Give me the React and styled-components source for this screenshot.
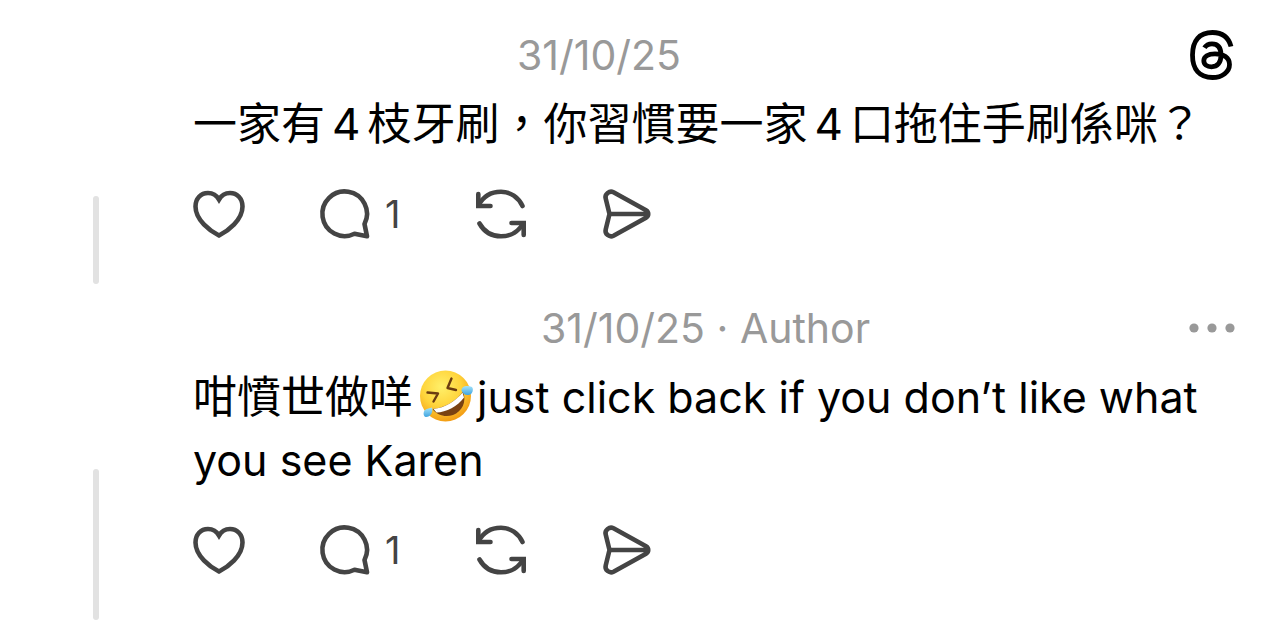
import React from 'react';
import styled, { createGlobalStyle } from 'styled-components';

const GlobalStyle = createGlobalStyle`
  * { box-sizing: border-box; }
  body {
    margin: 0;
    background: #fff;
    color: #000;
    font-family: Inter, "Noto Sans CJK TC", sans-serif;
  }
`;

const Thread = styled.main`
  padding: 11px 49px 0 93px;
`;

const Post = styled.article`
  display: flex;
  gap: 94px;
`;

const Rail = styled.div`
  flex: none;
  width: 6px;
  margin-top: 185px;
  border-radius: 3px;
  background: #e2e2e2;
`;

const Content = styled.div`
  flex: 1;
  min-width: 0;
  padding: 14px 0 42px;
`;

const Header = styled.header`
  display: flex;
  align-items: center;
  height: 60px;
  margin-bottom: 8px;
  color: #999;
  font-size: 41px;
  line-height: 60px;
`;

const NameSlot = styled.span`
  flex: none;
  width: ${(p) => p.$width}px;
`;

const Meta = styled.span`
  flex: 1;
  white-space: nowrap;
`;

const IconButton = styled.button`
  display: flex;
  align-items: center;
  padding: 0;
  border: 0;
  background: none;
  color: ${(p) => p.$color || '#444'};
  font: inherit;
  cursor: pointer;

  svg { display: block; overflow: visible; }
`;

const Body = styled.p`
  margin: 0 -16px 30px 0;
  font-size: 44px;
  line-height: 63px;
`;

const Digit = styled.span`
  margin: 0 7px;
`;

const Latin = styled.span`
  font-size: 43px;
`;

const EmojiSvg = styled.svg`
  width: 54px;
  height: 54px;
  margin: 0 4px 0 6px;
  vertical-align: -10px;
`;

const Actions = styled.div`
  display: flex;
  align-items: center;
  height: 56px;
`;

const ActionSlot = styled.div`
  width: ${(p) => p.$width}px;
`;

const Count = styled.span`
  margin-left: 14px;
  font-size: 38px;
  line-height: 56px;
`;

const stroke = {
  fill: 'none',
  stroke: 'currentColor',
  strokeWidth: 4.6,
  strokeLinecap: 'round',
  strokeLinejoin: 'round',
};

const Heart = () => (
  <svg width="52" height="52" viewBox="0 0 52 52" {...stroke} aria-hidden="true">
    <path strokeLinejoin="miter" d="M26 11.5C23.5 7.2 19.3 5 15 5C7.800 5 2.500 10.500 2.500 18.500C2.500 32 17 43 26 47.500C35 43 49.500 32 49.500 18.500C49.500 10.500 44.200 5 37 5C32.700 5 28.500 7.200 26 11.500Z" />
  </svg>
);

const Bubble = () => (
  <svg width="52" height="52" viewBox="0 0 52 52" {...stroke} aria-hidden="true">
    <path d="M45.500 36A22.300 22.300 0 1 0 35.500 45.800L48 48.200Z" />
  </svg>
);

const Repost = () => (
  <svg width="52" height="52" viewBox="0 0 52 52" {...stroke} aria-hidden="true">
    <path d="M3.500 17.500C8 8.500 16 3.700 26 3.700C35.500 3.700 43.500 9.500 47.500 18" />
    <path strokeLinejoin="miter" d="M3.300 6V18H15.500" />
    <path d="M4.500 35.500C9 43.500 16.500 48.300 26 48.300C36 48.300 44 43 48 35.500" />
    <path strokeLinejoin="miter" d="M36.500 35H48.700V47" />
  </svg>
);

const Send = () => (
  <svg width="52" height="52" viewBox="0 0 52 52" {...stroke} aria-hidden="true">
    <path d="M12.500 4.300L45 22.300C48 24 48 28 45 29.700L12.500 47.700C8.500 49.700 3.500 46 4.700 41.500L8.500 26L4.700 10.500C3.500 6 8.500 2.300 12.500 4.300ZM8.500 26H46" />
  </svg>
);

const ThreadsLogo = () => (
  <svg width="45" height="50" viewBox="0 0 45 50" {...stroke} strokeWidth="4.8" strokeLinecap="butt" aria-hidden="true">
    <path d="M41 16.500C38.500 7 32.500 2.500 22.500 2.500C9.500 2.500 2.500 10.500 2.500 25C2.500 39.500 9.500 47.500 22.500 47.500C32 47.500 39.500 42 39.500 34.500C39.500 27.500 33.500 23.800 25 23.800C18 23.800 13.800 26.500 13.800 30.800C13.800 34.500 17 36.800 21.500 36.800C27.500 36.800 31 32.800 31 25C31 17.500 28 13.800 22 13.800C18.500 13.800 16 15.200 14.500 17.800" />
  </svg>
);

const Dots = () => (
  <svg width="46" height="10" viewBox="0 0 46 10" fill="currentColor" aria-hidden="true">
    <circle cx="5" cy="5" r="4.600" />
    <circle cx="23" cy="5" r="4.600" />
    <circle cx="41" cy="5" r="4.600" />
  </svg>
);

const Rofl = () => (
  <EmojiSvg viewBox="0 0 54 54" role="img" aria-label="rolling on the floor laughing">
    <defs>
      <radialGradient id="face" cx="0.42" cy="0.32" r="0.7">
        <stop offset="0" stopColor="#fff06a" />
        <stop offset="0.55" stopColor="#ffd43b" />
        <stop offset="1" stopColor="#f29a12" />
      </radialGradient>
      <linearGradient id="tear" x1="0" y1="0" x2="0" y2="1">
        <stop offset="0" stopColor="#a5e3fa" />
        <stop offset="1" stopColor="#3fa4e0" />
      </linearGradient>
    </defs>
    <circle cx="26.500" cy="27" r="25.500" fill="url(#face)" />
    <path d="M13.500 40C25 39.500 38 31.500 44 22.500C48 33 43 42.500 34 46C26.500 48.500 18 46.500 13.500 40Z" fill="#7a4212" />
    <path d="M14.500 40C25.500 39 37.500 31.500 43.500 23.500L45 28.500C39 37 27 43.500 17.500 43.500Z" fill="#fff" />
    <path d="M8.500 23.500L19 24.500L14.500 32.500M32.500 9.500L28.500 19L37 21" fill="none" stroke="#6b3c10" strokeWidth="2.400" strokeLinecap="round" strokeLinejoin="round" />
    <path d="M42.500 21.500C42.500 16.500 49 16 53 18C55 20.500 53.500 25.500 49.500 26C46 26.500 43.500 24.500 42.500 21.500Z" fill="url(#tear)" />
    <path d="M13 38.500C14.500 43 11.500 48 7 48C4 47.500 4 43 6 41C8 39.500 11 39.500 13 38.500Z" fill="url(#tear)" />
  </EmojiSvg>
);

function PostActions({ replies }) {
  return (
    <Actions>
      <ActionSlot $width={126}>
        <IconButton type="button" aria-label="Like"><Heart /></IconButton>
      </ActionSlot>
      <ActionSlot $width={156}>
        <IconButton type="button" aria-label="Reply">
          <Bubble />
          <Count>{replies}</Count>
        </IconButton>
      </ActionSlot>
      <ActionSlot $width={126}>
        <IconButton type="button" aria-label="Repost"><Repost /></IconButton>
      </ActionSlot>
      <IconButton type="button" aria-label="Share"><Send /></IconButton>
    </Actions>
  );
}

function ThreadPost({ nameWidth, meta, control, replies, children }) {
  return (
    <Post>
      <Rail />
      <Content>
        <Header>
          <NameSlot $width={nameWidth} />
          <Meta>{meta}</Meta>
          {control}
        </Header>
        <Body>{children}</Body>
        <PostActions replies={replies} />
      </Content>
    </Post>
  );
}

export default function App() {
  return (
    <>
      <GlobalStyle />
      <Thread lang="zh-Hant">
        <ThreadPost
          nameWidth={324}
          meta="31/10/25"
          replies={1}
          control={<IconButton type="button" $color="#000" aria-label="Threads"><ThreadsLogo /></IconButton>}
        >
          一家有<Digit>4</Digit>枝牙刷，你習慣要一家<Digit>4</Digit>口拖住手刷係咪？
        </ThreadPost>
        <ThreadPost
          nameWidth={348}
          meta="31/10/25 · Author"
          replies={1}
          control={<IconButton type="button" $color="#999" aria-label="More"><Dots /></IconButton>}
        >
          咁憤世做咩<Rofl /><Latin>just click back if you don’t like what you see Karen</Latin>
        </ThreadPost>
      </Thread>
    </>
  );
}
